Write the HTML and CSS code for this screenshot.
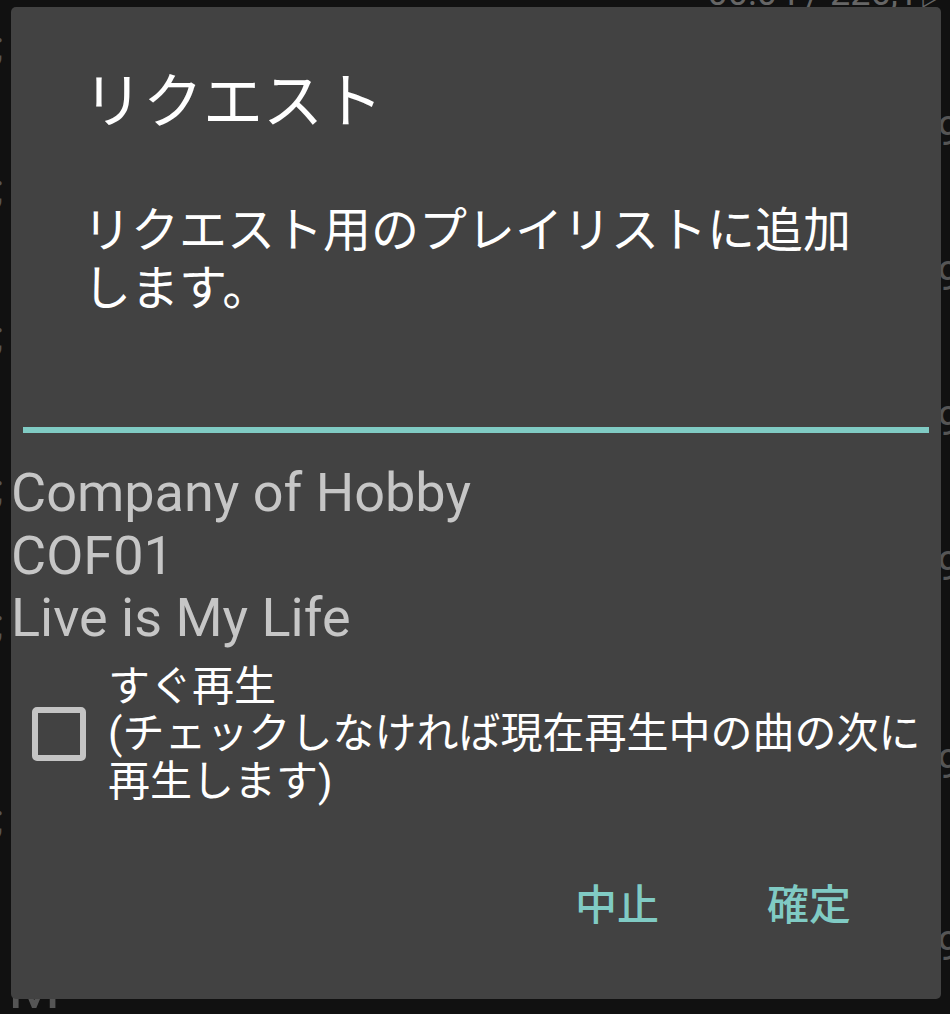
FILE: index.html
```html
<!DOCTYPE html>
<html lang="ja">
<head>
<meta charset="utf-8">
<title>リクエスト</title>
<link rel="stylesheet" href="styles.css">
</head>
<body>
<div class="screen">
  <div class="bg">
    <div class="bg-top">00:04 / 226,1▷</div>
    <div class="bg-cols">
      <div class="bg-left">
        <span class="mark">;</span>
        <span class="mark">;</span>
        <span class="mark">;</span>
        <span class="mark">;</span>
        <span class="mark">;</span>
        <span class="mark">;</span>
        <span class="big-m">M</span>
      </div>
      <div class="bg-right">
        <span class="nine">9</span>
        <span class="nine">9</span>
        <span class="nine">9</span>
        <span class="nine">9</span>
        <span class="nine">9</span>
        <span class="nine">9</span>
      </div>
    </div>
  </div>

  <div class="dialog">
    <h1 class="title">リクエスト</h1>
    <p class="message">リクエスト用のプレイリストに追加します。</p>
    <div class="edit"></div>
    <div class="info">
      <div>Company of Hobby</div>
      <div>COF01</div>
      <div>Live is My Life</div>
    </div>
    <label class="check-row">
      <span class="box"></span>
      <span class="label">すぐ再生<br>(チェックしなければ現在再生中の曲の次に再生します)</span>
    </label>
    <div class="buttons">
      <button class="btn">中止</button>
      <button class="btn">確定</button>
    </div>
  </div>
</div>
</body>
</html>
```

FILE: styles.css
```css
html, body {
  margin: 0;
  padding: 0;
  background: #111111;
}

.screen {
  position: relative;
  width: 950px;
  height: 1014px;
  overflow: hidden;
  background: #111111;
  font-family: Roboto, "Noto Sans CJK JP", sans-serif;
}

/* background list (mostly covered by dialog) */
.bg {
  height: 100%;
  display: flex;
  flex-direction: column;
  color: #5a5a5a;
}

.bg-top {
  font-size: 36px;
  line-height: 36px;
  height: 36px;
  margin-top: -25px;
  margin-bottom: -4px;
  margin-right: -4px;
  text-align: right;
  color: #666666;
  white-space: nowrap;
}

.bg-cols {
  flex: 1;
  display: flex;
  justify-content: space-between;
}

.bg-left,
.bg-right {
  display: flex;
  flex-direction: column;
}

.mark {
  display: block;
  height: 40px;
  font-size: 40px;
  line-height: 40px;
  margin-left: -5px;
  color: #555555;
}

.mark:nth-child(1) { margin-top: 20px; }
.mark:nth-child(2) { margin-top: 103px; }
.mark:nth-child(3) { margin-top: 107px; }
.mark:nth-child(4) { margin-top: 113px; }
.mark:nth-child(5) { margin-top: 95px; }
.mark:nth-child(6) { margin-top: 155px; }

.big-m {
  display: block;
  font-size: 60px;
  line-height: 60px;
  height: 60px;
  margin-top: 118px;
  margin-left: 8px;
  color: #555555;
}

.nine {
  display: block;
  height: 40px;
  font-size: 40px;
  line-height: 40px;
  margin-right: -10px;
  color: #555555;
}

.nine:nth-child(1) { margin-top: 105px; }
.nine:nth-child(2) { margin-top: 105px; }
.nine:nth-child(3) { margin-top: 105px; }
.nine:nth-child(4) { margin-top: 105px; }
.nine:nth-child(5) { margin-top: 158px; }
.nine:nth-child(6) { margin-top: 142px; }

/* dialog overlay */
.dialog {
  position: absolute;
  left: 11px;
  top: 7px;
  width: 930px;
  height: 992px;
  box-sizing: border-box;
  padding-top: 54px;
  padding-bottom: 43px;
  background: #424242;
  border-radius: 5px;
  display: flex;
  flex-direction: column;
}

.title {
  margin: 0;
  padding: 0 72px;
  font-family: "Noto Sans CJK JP", sans-serif;
  font-size: 60px;
  line-height: 72px;
  font-weight: 400;
  color: #ffffff;
}

.message {
  margin: 64px 0 0;
  padding: 0 72px;
  font-family: "Noto Sans CJK JP", sans-serif;
  font-size: 48px;
  line-height: 58px;
  color: #ffffff;
}

.edit {
  margin: 0 12px;
  height: 114px;
  border-bottom: 6px solid #80cbc4;
  flex: none;
}

.info {
  margin-top: 29px;
  font-family: Roboto, sans-serif;
  font-size: 54px;
  line-height: 62.5px;
  color: #c6c6c6;
}

.check-row {
  margin-top: 13px;
  display: flex;
  align-items: center;
  gap: 22px;
  padding-left: 21px;
}

.box {
  flex: none;
  width: 54px;
  height: 54px;
  box-sizing: border-box;
  border: 6px solid #c4c4c4;
  border-radius: 5px;
}

.label {
  flex: 1;
  font-family: Roboto, "Noto Sans CJK JP", sans-serif;
  font-size: 42px;
  line-height: 47.5px;
  color: #ffffff;
}

.buttons {
  margin-top: auto;
  display: flex;
  justify-content: flex-end;
  padding-right: 36px;
}

.btn {
  width: 192px;
  height: 108px;
  padding: 0;
  margin: 0;
  border: none;
  background: transparent;
  font-family: "Noto Sans CJK JP", sans-serif;
  font-size: 42px;
  line-height: 108px;
  font-weight: 500;
  color: #80cbc4;
  text-align: center;
}
```
